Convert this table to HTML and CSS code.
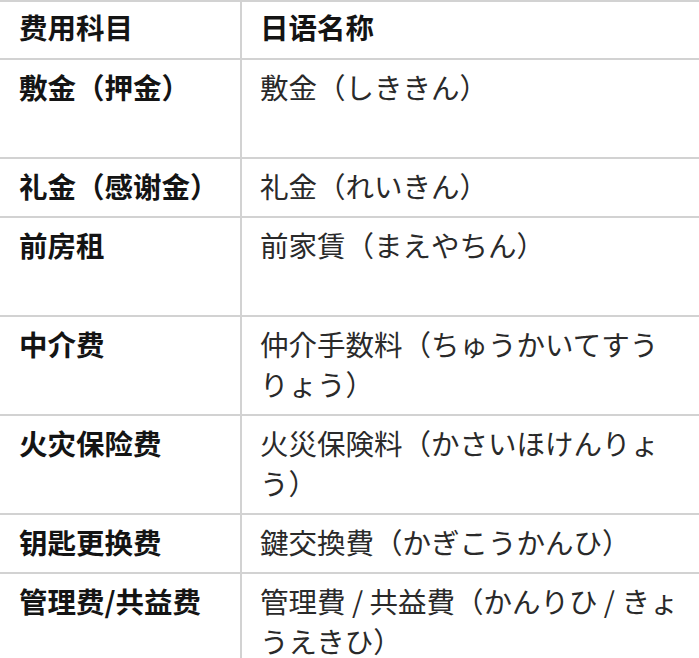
FILE: index.html
```html
<!DOCTYPE html>
<html lang="zh">
<head>
<meta charset="utf-8">
<link rel="stylesheet" href="styles.css">
<title>费用科目</title>
</head>
<body>
<table class="fees">
  <thead>
    <tr class="head">
      <th class="c1">费用科目</th>
      <th class="c2">日语名称</th>
    </tr>
  </thead>
  <tbody>
    <tr class="tall">
      <td class="c1">敷金（押金）</td>
      <td class="c2" lang="ja">敷金（しききん）</td>
    </tr>
    <tr>
      <td class="c1">礼金（感谢金）</td>
      <td class="c2" lang="ja">礼金（れいきん）</td>
    </tr>
    <tr class="tall">
      <td class="c1">前房租</td>
      <td class="c2" lang="ja">前家賃（まえやちん）</td>
    </tr>
    <tr>
      <td class="c1">中介费</td>
      <td class="c2" lang="ja">仲介手数料（ちゅうかいてすうりょう）</td>
    </tr>
    <tr>
      <td class="c1">火灾保险费</td>
      <td class="c2" lang="ja">火災保険料（かさいほけんりょう）</td>
    </tr>
    <tr>
      <td class="c1">钥匙更换费</td>
      <td class="c2" lang="ja">鍵交換費（かぎこうかんひ）</td>
    </tr>
    <tr>
      <td class="c1">管理费/共益费</td>
      <td class="c2" lang="ja">管理費 / 共益費（かんりひ / きょうえきひ）</td>
    </tr>
  </tbody>
</table>
</body>
</html>
```

FILE: styles.css
```css
html, body {
  margin: 0;
  padding: 0;
  background: #ffffff;
  overflow: hidden;
}

.fees {
  border-collapse: collapse;
  table-layout: fixed;
  width: 699px;
  font-size: 28.5px;
  line-height: 40px;
}

.fees th,
.fees td {
  border-top: 2px solid #d2d2d2;
  padding: 7px 0 10px 0;
  vertical-align: top;
  text-align: left;
  overflow-wrap: normal;
}

.fees .c1 {
  width: 221px;
  padding-left: 19px;
  border-right: 2px solid #d2d2d2;
  font-family: "Noto Sans CJK SC", sans-serif;
  font-weight: 700;
  color: #141414;
}

.fees .c2 {
  padding-left: 18px;
  padding-right: 17px;
  font-family: "Noto Sans CJK JP", sans-serif;
  font-weight: 400;
  color: #2a2a2a;
}

.fees .head th {
  padding-top: 5px;
  padding-bottom: 11px;
}

.fees .head .c2 {
  font-family: "Noto Sans CJK SC", sans-serif;
  font-weight: 700;
  color: #141414;
}

.fees .tall td {
  height: 80px;
}
```
